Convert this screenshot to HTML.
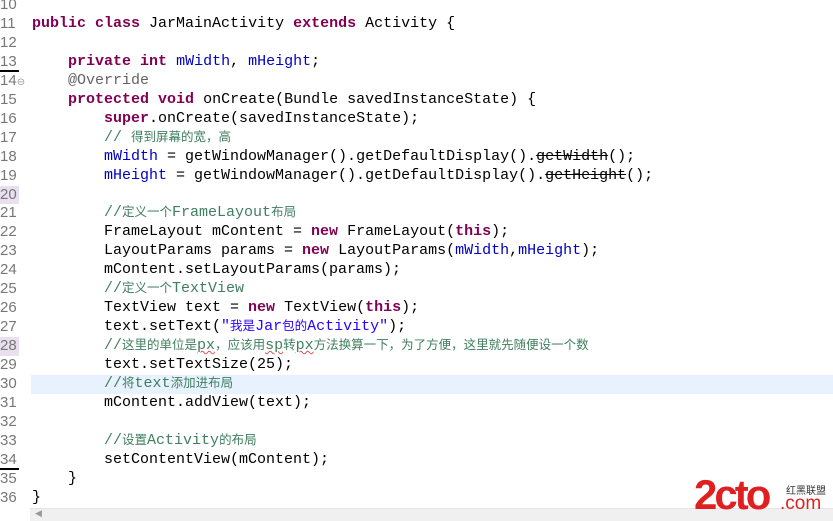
<!DOCTYPE html>
<html><head><meta charset="utf-8"><style>
html,body{margin:0;padding:0;width:833px;height:521px;overflow:hidden;background:#fff;position:relative}
.code{position:absolute;left:0;top:-4px;width:833px;font-family:"Liberation Mono","Noto Sans CJK SC",monospace;font-size:15px;line-height:18.96px;color:#000}
.r{height:18.96px;position:relative}
.n{position:absolute;left:0;top:0;height:18.96px;width:30px;color:#787878;font-family:"Liberation Sans",sans-serif;font-size:15px;white-space:nowrap}
.t{position:absolute;left:32px;top:0;height:18.96px;white-space:pre}
.k{color:#7f0055;font-weight:bold}
.f{color:#0000c0}
.c{color:#3f7f5f}
.s{color:#2a00ff}
.a{color:#646464}
.cj{font-family:"Noto Sans CJK SC",sans-serif;font-size:12.5px;line-height:1px}
.hl{background:#e8f2fe}
.ln{background:#e8e0ee}
.del{text-decoration:line-through;text-decoration-color:#000;text-decoration-skip-ink:none}
.sq{text-decoration:underline wavy #e05050;text-decoration-thickness:1px}
</style></head><body>
<div class="code">
<div class="r"><span class="n">10</span></div>
<div class="r"><span class="n">11</span><span class="t"><span class="k">public</span> <span class="k">class</span> JarMainActivity <span class="k">extends</span> Activity {</span></div>
<div class="r"><span class="n">12</span></div>
<div class="r"><span class="n" style="border-bottom:2px solid #000;width:19px;height:17px">13</span><span class="t">    <span class="k">private</span> <span class="k">int</span> <span class="f">mWidth</span>, <span class="f">mHeight</span>;</span></div>
<div class="r"><span class="n">14<span style="color:#999;font-size:10px">⊖</span></span><span class="t">    <span class="a">@Override</span></span></div>
<div class="r"><span class="n">15</span><span class="t">    <span class="k">protected</span> <span class="k">void</span> onCreate(Bundle savedInstanceState) {</span></div>
<div class="r"><span class="n">16</span><span class="t">        <span class="k">super</span>.onCreate(savedInstanceState);</span></div>
<div class="r"><span class="n">17</span><span class="t">        <span class="c">// <span class="cj">得到屏幕的宽，高</span></span></span></div>
<div class="r"><span class="n">18</span><span class="t">        <span class="f">mWidth</span> = getWindowManager().getDefaultDisplay().<span class="del">getWidth</span>();</span></div>
<div class="r"><span class="n">19</span><span class="t">        <span class="f">mHeight</span> = getWindowManager().getDefaultDisplay().<span class="del">getHeight</span>();</span></div>
<div class="r"><span class="n ln" style="width:19px">20</span></div>
<div class="r"><span class="n">21</span><span class="t">        <span class="c">//<span class="cj">定义一个</span>FrameLayout<span class="cj">布局</span></span></span></div>
<div class="r"><span class="n">22</span><span class="t">        FrameLayout mContent = <span class="k">new</span> FrameLayout(<span class="k">this</span>);</span></div>
<div class="r"><span class="n">23</span><span class="t">        LayoutParams params = <span class="k">new</span> LayoutParams(<span class="f">mWidth</span>,<span class="f">mHeight</span>);</span></div>
<div class="r"><span class="n">24</span><span class="t">        mContent.setLayoutParams(params);</span></div>
<div class="r"><span class="n">25</span><span class="t">        <span class="c">//<span class="cj">定义一个</span>TextView</span></span></div>
<div class="r"><span class="n">26</span><span class="t">        TextView text = <span class="k">new</span> TextView(<span class="k">this</span>);</span></div>
<div class="r"><span class="n">27</span><span class="t">        text.setText(<span class="s">"<span class="cj">我是</span>Jar<span class="cj">包的</span>Activity"</span>);</span></div>
<div class="r"><span class="n ln" style="width:19px">28</span><span class="t">        <span class="c">//<span class="cj">这里的单位是</span><span class="sq">px</span><span class="cj">，应该用</span><span class="sq">sp</span><span class="cj">转</span><span class="sq">px</span><span class="cj">方法换算一下，为了方便，这里就先随便设一个数</span></span></span></div>
<div class="r"><span class="n">29</span><span class="t">        text.setTextSize(25);</span></div>
<div class="r"><div class="hl" style="position:absolute;left:31px;right:0;top:0;height:18.96px"></div><span class="n">30</span><span class="t">        <span class="c">//<span class="cj">将</span>text<span class="cj">添加进布局</span></span></span></div>
<div class="r"><span class="n">31</span><span class="t">        mContent.addView(text);</span></div>
<div class="r"><span class="n">32</span></div>
<div class="r"><span class="n">33</span><span class="t">        <span class="c">//<span class="cj">设置</span>Activity<span class="cj">的布局</span></span></span></div>
<div class="r"><span class="n" style="border-bottom:2px solid #000;width:19px;height:17px">34</span><span class="t">        setContentView(mContent);</span></div>
<div class="r"><span class="n">35</span><span class="t">    }</span></div>
<div class="r"><span class="n">36</span><span class="t">}</span></div>
</div>
<div style="position:absolute;left:30px;top:508px;width:803px;height:13px;background:#f0f0f0;border-top:1px solid #e4e4e4"></div>
<div style="position:absolute;left:35px;top:509px;font-size:9px;color:#999;font-family:'DejaVu Sans',sans-serif">◀</div>
<div style="position:absolute;left:694px;top:474px;font-family:'Liberation Sans',sans-serif;font-weight:bold;color:#e02020;font-size:42px;letter-spacing:-3px;line-height:42px">2cto</div>
<div style="position:absolute;left:780px;top:494px;font-family:'Liberation Sans',sans-serif;color:#e02020;font-size:19px;line-height:20px">.com</div>
<div style="position:absolute;left:786px;top:484px;font-family:'Noto Sans CJK SC',sans-serif;color:#333;font-size:10px;line-height:12px">红黑联盟</div>
</body></html>
